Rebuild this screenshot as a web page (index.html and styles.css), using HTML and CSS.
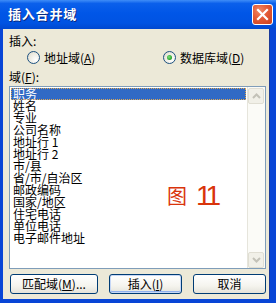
FILE: index.html
```html
<!doctype html>
<html lang="zh">
<head>
    <meta charset="UTF-8">
    <title>插入合并域</title>
    <link rel="stylesheet" href="styles.css">
</head>
<body>

    <div class="window">

        <div class="titlebar">
            <span class="title">插入合并域</span>
            <span class="close">
                <svg width="13" height="13" viewBox="0 0 13 13"><path d="M2 2 L11 11 M11 2 L2 11" stroke="#fff" stroke-width="2.2" stroke-linecap="square"/></svg>
            </span>
        </div>

        <div class="frame">
            <div class="client">

                <div class="label">插入:</div>

                <div class="radios">
                    <div class="radio"><span class="dot"></span>地址域(<u>A</u>)</div>
                    <div class="radio checked"><span class="dot"></span>数据库域(<u>D</u>)</div>
                </div>

                <div class="label field-label">域(<u>F</u>):</div>

                <div class="listbox">
                    <ul class="items">
                        <li class="selected"><span>职务</span></li>
                        <li>姓名</li>
                        <li>专业</li>
                        <li>公司名称</li>
                        <li>地址行 1</li>
                        <li>地址行 2</li>
                        <li>市/县</li>
                        <li>省/市/自治区</li>
                        <li>邮政编码</li>
                        <li>国家/地区</li>
                        <li>住宅电话</li>
                        <li>单位电话</li>
                        <li>电子邮件地址</li>
                    </ul>
                    <div class="scrollbar">
                        <span class="arrow"><svg width="9" height="6" viewBox="0 0 9 6"><path d="M1 5 L4.5 1.5 L8 5" fill="none" stroke="#c3c2b8" stroke-width="2"/></svg></span>
                        <span class="arrow"><svg width="9" height="6" viewBox="0 0 9 6"><path d="M1 1 L4.5 4.5 L8 1" fill="none" stroke="#c3c2b8" stroke-width="2"/></svg></span>
                    </div>
                </div>

                <div class="buttons">
                    <div class="btn wide">匹配域(<u>M</u>)...</div>
                    <div class="btn default">插入(<u>I</u>)</div>
                    <div class="btn">取消</div>
                </div>

            </div>
        </div>

        <div class="note"><span class="note-char">图</span><span class="note-num">11</span></div>

    </div>

</body>
</html>
```

FILE: styles.css
```css
body{
    margin:0;
    padding:0;
    overflow: hidden;
    font-family: "Noto Sans CJK SC", "Liberation Sans", sans-serif;
    font-size: 12px;
    color: #000;
}
.window{
    position: relative;
    width: 276px;
    height: 303px;
    display: flex;
    flex-direction: column;
    background: #0845d6;
}
.titlebar{
    height: 29px;
    display: flex;
    align-items: center;
    justify-content: space-between;
    padding: 0 3px 1px 8px;
    background: linear-gradient(to bottom, #3f8df7 0%, #0b60eb 12%, #0056e7 45%, #0053e2 80%, #0048cf 100%);
}
.title{
    color: #fff;
    font-weight: bold;
    font-size: 13px;
    letter-spacing: 0.8px;
    line-height: 14px;
    text-shadow: 1px 1px 0 #0a2a80;
}
.close{
    width: 21px;
    height: 21px;
    box-sizing: border-box;
    border: 1px solid #fff;
    border-radius: 3px;
    background: radial-gradient(circle at 35% 30%, #f08866 0%, #e35a36 45%, #c8401f 100%);
    display: flex;
    align-items: center;
    justify-content: center;
}
.frame{
    flex: 1;
    display: flex;
    padding: 0 8px 4px 3px;
}
.client{
    flex: 1;
    display: flex;
    flex-direction: column;
    background: #ece9d8;
    padding: 6px 3px 5px 6px;
    box-shadow: 1px 0 0 #1a3b9a;
}
.label{
    line-height: 12px;
    height: 12px;
}
.radios{
    display: flex;
    margin-top: 4px;
    height: 13px;
}
.radio{
    display: flex;
    align-items: center;
    line-height: 13px;
}
.radio:first-child{
    margin-left: 18px;
    width: 136px;
}
.dot{
    width: 13px;
    height: 13px;
    box-sizing: border-box;
    border: 1px solid #1c5180;
    border-radius: 50%;
    background: radial-gradient(circle at 70% 70%, #fff 0%, #eceae0 60%, #d6d3c4 100%);
    margin-right: 4px;
    position: relative;
}
.checked .dot::after{
    content: "";
    position: absolute;
    left: 3px;
    top: 3px;
    width: 5px;
    height: 5px;
    border-radius: 50%;
    background: radial-gradient(circle at 40% 40%, #7fe07f 0%, #22a122 70%, #158315 100%);
}
.field-label{
    margin-top: 7px;
}
.listbox{
    margin-top: 3px;
    height: 183px;
    box-sizing: border-box;
    border: 1px solid #7f9db9;
    background: #fff;
    display: flex;
}
.items{
    flex: 1;
    list-style: none;
    margin: 0;
    padding: 1px 1px 0 1px;
}
.items li{
    height: 12px;
    line-height: 12px;
    padding-left: 2px;
    white-space: nowrap;
}
.items li.selected{
    background: #316ac5;
    color: #fff;
    outline: 1px dotted #e0a850;
    outline-offset: -1px;
}
.scrollbar{
    width: 17px;
    display: flex;
    flex-direction: column;
    justify-content: space-between;
    background: #fbfbf7;
    border-left: 1px solid #e6e5dc;
    padding: 1px 0 0;
}
.arrow{
    width: 16px;
    height: 16px;
    box-sizing: border-box;
    border: 1px solid #e0ded3;
    border-radius: 2px;
    background: #f1f0e8;
    display: flex;
    align-items: center;
    justify-content: center;
}
.buttons{
    display: flex;
    gap: 11px;
    margin-top: 5px;
    margin-left: 1px;
}
.btn{
    width: 73px;
    height: 20px;
    box-sizing: border-box;
    border: 1px solid #003c74;
    border-radius: 3px;
    background: linear-gradient(to bottom, #fff 0%, #f5f4ee 60%, #e3e2da 100%);
    display: flex;
    align-items: center;
    justify-content: center;
    line-height: 12px;
}
.btn.wide{
    width: 88px;
}
.btn.default{
    box-shadow: inset 0 0 0 1px #c6d7f6, inset 0 -1px 0 1px #91b1ee;
}
.note{
    position: absolute;
    left: 167px;
    top: 182px;
    color: #d9340b;
    white-space: nowrap;
    display: flex;
    align-items: center;
}
.note-char{
    font-size: 20px;
    line-height: 28px;
    margin-right: 9px;
}
.note-num{
    font-family: "Liberation Sans", sans-serif;
    font-size: 28px;
    line-height: 28px;
    letter-spacing: -4px;
}
```
